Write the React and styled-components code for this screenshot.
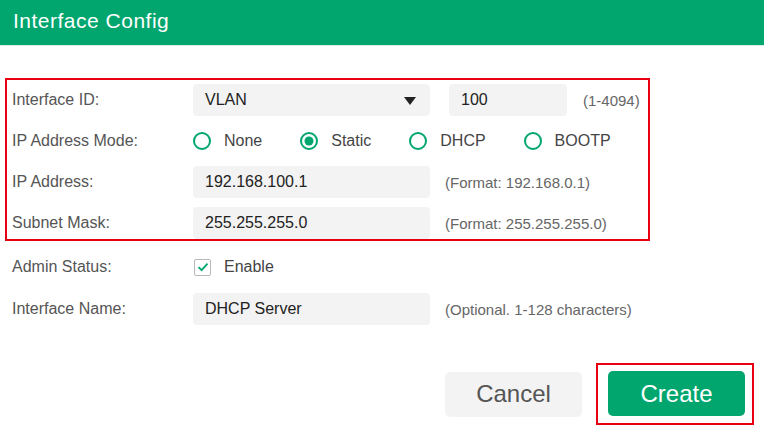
import React, { useState } from 'react';
import styled, { createGlobalStyle } from 'styled-components';

const colors = {
  green: '#00a66e',
  red: '#e60012',
  field: '#f3f3f3',
  label: '#555555',
  text: '#222222',
  hint: '#666666',
};

const GlobalStyle = createGlobalStyle`
  html, body {
    margin: 0;
    padding: 0;
    background: #ffffff;
    font-family: "Liberation Sans", Arial, sans-serif;
  }
`;

const modes = ['None', 'Static', 'DHCP', 'BOOTP'];

const App = () => {
  const [mode, setMode] = useState('Static');
  const [enabled, setEnabled] = useState(true);

  return (
    <Dialog>
      <GlobalStyle />
      <Header>Interface Config</Header>
      <Body>
        <Highlight>
          <Row>
            <Label>Interface ID:</Label>
            <Select>
              <span>VLAN</span>
              <Caret />
            </Select>
            <NumberField>100</NumberField>
            <Hint $gap={16}>(1-4094)</Hint>
          </Row>
          <Row>
            <Label>IP Address Mode:</Label>
            <RadioGroup>
              {modes.map(m => (
                <RadioItem key={m} onClick={() => setMode(m)}>
                  <RadioIcon checked={mode === m} />
                  <span>{m}</span>
                </RadioItem>
              ))}
            </RadioGroup>
          </Row>
          <Row>
            <Label>IP Address:</Label>
            <Field>192.168.100.1</Field>
            <Hint>(Format: 192.168.0.1)</Hint>
          </Row>
          <Row>
            <Label>Subnet Mask:</Label>
            <Field>255.255.255.0</Field>
            <Hint>(Format: 255.255.255.0)</Hint>
          </Row>
        </Highlight>
        <Row>
          <Label>Admin Status:</Label>
          <CheckItem onClick={() => setEnabled(!enabled)}>
            <CheckBox>
              {enabled && (
                <svg width="12" height="10" viewBox="0 0 12 10">
                  <path d="M1.5 5.2 L4.6 8.2 L10.5 1.6" fill="none" stroke={colors.green} strokeWidth="1.8" />
                </svg>
              )}
            </CheckBox>
            <span>Enable</span>
          </CheckItem>
        </Row>
        <Row>
          <Label>Interface Name:</Label>
          <Field>DHCP Server</Field>
          <Hint>(Optional. 1-128 characters)</Hint>
        </Row>
        <Actions>
          <Button>Cancel</Button>
          <ButtonMark>
            <Button $primary>Create</Button>
          </ButtonMark>
        </Actions>
      </Body>
    </Dialog>
  );
};

const RadioIcon = ({ checked }) => (
  <svg width="18" height="18" viewBox="0 0 18 18">
    <circle cx="9" cy="9" r="8" fill="none" stroke={colors.green} strokeWidth="2" />
    {checked && <circle cx="9" cy="9" r="4.5" fill={colors.green} />}
  </svg>
);

const Dialog = styled.div`
  width: 764px;
  height: 436px;
  background: #ffffff;
  overflow: hidden;
`;

const Header = styled.div`
  height: 45px;
  padding-left: 13px;
  background: ${colors.green};
  border-bottom: 1px solid #d6f0e5;
  color: #ffffff;
  font-size: 21px;
  letter-spacing: 0.5px;
  line-height: 42px;
`;

const Body = styled.div`
  display: flex;
  flex-direction: column;
  gap: 10px;
  padding: 32px 10px 0 12px;
`;

const Highlight = styled.div`
  display: flex;
  flex-direction: column;
  gap: 9px;
  width: 633px;
  margin-left: -7px;
  padding: 4px 3px 0 5px;
  border: 2px solid ${colors.red};
`;

const Row = styled.div`
  display: flex;
  align-items: center;
  height: 32px;
`;

const Label = styled.div`
  width: 181px;
  flex-shrink: 0;
  color: ${colors.label};
  font-size: 16px;
`;

const Field = styled.div`
  display: flex;
  align-items: center;
  box-sizing: border-box;
  width: 237px;
  height: 32px;
  padding: 0 12px;
  border-radius: 4px;
  background: ${colors.field};
  color: ${colors.text};
  font-size: 16px;
`;

const Select = styled(Field)`
  justify-content: space-between;
  padding-right: 14px;
`;

const Caret = styled.span`
  width: 0;
  height: 0;
  border-left: 6px solid transparent;
  border-right: 6px solid transparent;
  border-top: 8px solid #222;
  margin-top: 2px;
`;

const NumberField = styled(Field)`
  width: 118px;
  margin-left: 19px;
`;

const Hint = styled.span`
  margin-left: ${p => p.$gap || 15}px;
  color: ${colors.hint};
  font-size: 15px;
`;

const RadioGroup = styled.div`
  display: flex;
  align-items: center;
  gap: 38px;
`;

const RadioItem = styled.label`
  display: flex;
  align-items: center;
  gap: 13px;
  color: #444;
  font-size: 16px;
  cursor: pointer;
  svg {
    display: block;
  }
`;

const CheckItem = styled(RadioItem)`
  gap: 13px;
  margin-left: 1px;
`;

const CheckBox = styled.span`
  display: flex;
  align-items: center;
  justify-content: center;
  box-sizing: border-box;
  width: 17px;
  height: 17px;
  border: 1px solid #b8b8b8;
  border-radius: 2px;
  background: #fff;
`;

const Actions = styled.div`
  display: flex;
  justify-content: flex-end;
  align-items: center;
  gap: 14px;
  margin-top: 28px;
`;

const ButtonMark = styled.div`
  padding: 6px 7px 7px 10px;
  border: 2px solid ${colors.red};
`;

const Button = styled.button`
  width: 137px;
  height: 45px;
  border: 0;
  border-radius: 5px;
  background: ${p => (p.$primary ? colors.green : colors.field)};
  color: ${p => (p.$primary ? '#ffffff' : '#555')};
  font-family: "Liberation Sans", Arial, sans-serif;
  font-size: 24px;
  cursor: pointer;
`;

export default App;
